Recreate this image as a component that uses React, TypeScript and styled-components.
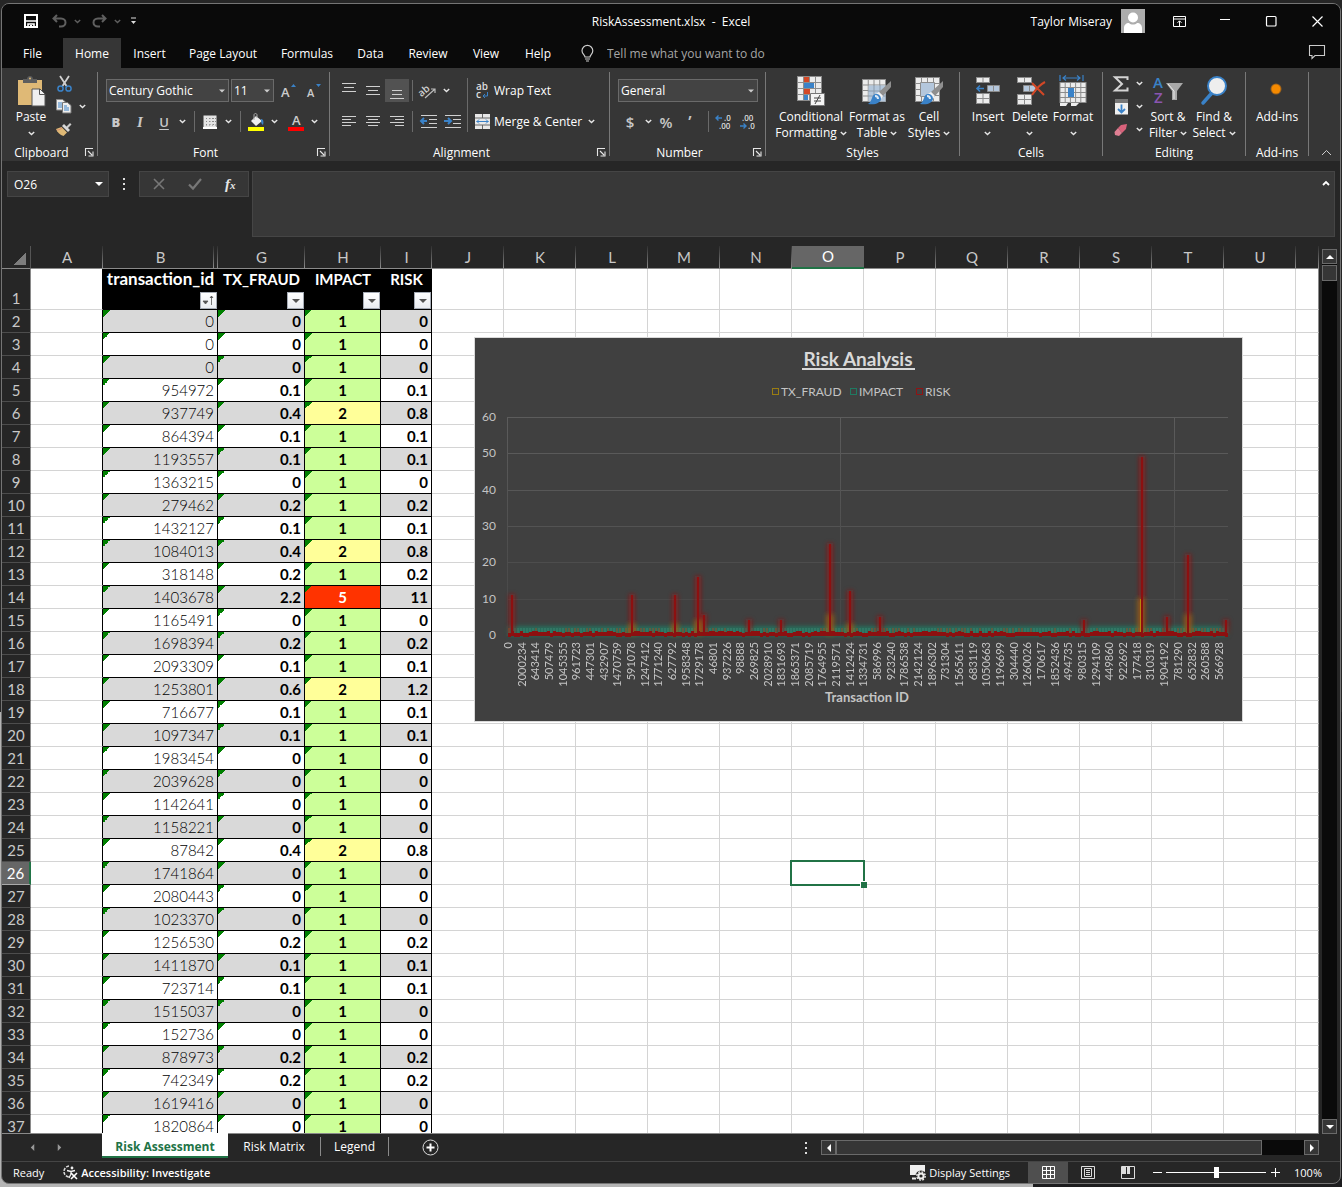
import React from "react";
import styled, { createGlobalStyle, css } from "styled-components";

const ui = `"Open Sans", "Noto Sans", sans-serif`;
const gothic = `Lato, "Open Sans", sans-serif`;

const c = {
  title: "#0a0a0a",
  ribbon: "#363636",
  pane: "#262626",
  line: "#6a6a6a",
  icon: "#e6e6e6",
  dim: "#c8c8c8",
  blue: "#3a82c8",
  gold: "#dfb976",
  green: "#217346",
};

const Global = createGlobalStyle`
  * { box-sizing: border-box; }
  body { margin: 0; background: #1c1c1e; font-family: ${ui}; font-size: 12px; color: #fff; }
  button, input, select { font: inherit; color: inherit; background: none; border: 0; padding: 0; margin: 0; border-radius: 0; }
  svg { display: block; flex: none; overflow: visible; }
`;

const Desktop = styled.div`
  height: 100vh;
  display: flex;
  flex-direction: column;
  padding: 3px 1px 0;
  background: linear-gradient(#262626, #262626) top / 100% 60% no-repeat, linear-gradient(90deg, #b4b4b4 77%, #1c1c1e 77%);
`;
const Window = styled.div`
  flex: 1;
  min-height: 0;
  display: flex;
  flex-direction: column;
  margin-bottom: 3px;
  border: 1px solid #757575;
  border-radius: 8px;
  overflow: hidden;
  background: ${c.pane};
`;

/* title bar */
const TitleBar = styled.header`
  display: grid;
  grid-template-columns: 1fr auto 1fr;
  align-items: center;
  height: 34px;
  flex: none;
  background: ${c.title};
`;
const QuickAccess = styled.div`
  display: flex;
  align-items: center;
  gap: 4px;
  padding-left: 17px;
`;
const DocTitle = styled.div`white-space: pre;`;
const TitleRight = styled.div`
  display: flex;
  align-items: center;
  justify-content: flex-end;
`;
const UserName = styled.span`margin-right: 9px;`;
const Avatar = styled.span`margin-right: 11px;`;
const SysButton = styled.button`
  width: 46px;
  height: 30px;
  display: grid;
  place-items: center;
`;

/* ribbon tabs */
const TabBar = styled.nav`
  display: flex;
  align-items: stretch;
  height: 30px;
  flex: none;
  background: ${c.title};
`;
const RibbonTab = styled.button<{ $w: number; $on?: boolean }>`
  width: ${(p) => p.$w}px;
  text-align: center;
  white-space: nowrap;
  background: ${(p) => (p.$on ? c.ribbon : "none")};
`;
const TellMe = styled.label`
  display: flex;
  align-items: center;
  flex: 1;
  gap: 13px;
  padding-left: 16px;
`;
const TellInput = styled.input`
  width: 200px;
  outline: 0;
  &::placeholder { color: #a6a6a6; opacity: 1; }
`;

/* ribbon */
const Ribbon = styled.div`
  display: grid;
  grid-template-columns: 96px 232px 280px 156px 194px 143px 143px 63px 1fr;
  height: 93px;
  padding: 4px 0 5px;
  flex: none;
  background: ${c.ribbon};
`;
const GroupBox = styled.section`
  display: flex;
  flex-direction: column;
  border-right: 1px solid #787878;
`;
const GroupBody = styled.div<{ $pad?: number }>`
  display: flex;
  flex: 1;
  padding-left: ${(p) => p.$pad ?? 0}px;
`;
const GroupLabel = styled.div<{ $launch?: boolean }>`
  display: grid;
  grid-template-columns: 1fr ${(p) => (p.$launch ? "16px" : "")};
  align-items: center;
  height: 16px;
  margin-bottom: -4px;
  text-align: center;
  white-space: nowrap;
  button { justify-self: center; }
`;
const Rows = styled.div`
  display: flex;
  flex-direction: column;
  gap: 8px;
  padding-top: 7px;
`;
const Row = styled.div<{ $gap?: number }>`
  display: flex;
  align-items: center;
  height: 23px;
  gap: ${(p) => p.$gap ?? 0}px;
`;
const Split = styled.div`
  display: flex;
  margin-right: 4px;
`;
const Tool = styled.button<{ $on?: boolean; $narrow?: boolean }>`
  width: ${(p) => (p.$narrow ? 12 : 24)}px;
  height: 23px;
  display: grid;
  place-items: center;
  flex: none;
  color: ${c.dim};
  background: ${(p) => (p.$on ? "#525252" : "none")};
`;
const Glyph = styled.span<{ $kind?: "b" | "i" | "u"; $size?: number }>`
  font-size: ${(p) => p.$size ?? 13}px;
  line-height: 16px;
  font-weight: ${(p) => (p.$kind === "b" ? 800 : 600)};
  ${(p) => p.$kind === "i" && css`font-style: italic; font-family: "Liberation Serif", serif; font-size: 15px; font-weight: 700;`}
  ${(p) => p.$kind === "u" && css`text-decoration: underline; text-underline-offset: 2px;`}
`;
const Sep = styled.i<{ $tall?: boolean; $lead?: boolean }>`
  width: 1px;
  height: ${(p) => (p.$tall ? 54 : 21)}px;
  margin: ${(p) => (p.$tall ? "6px 4px 0 3px" : p.$lead ? "0 3px 0 6px" : "0 3px")};
  background: ${c.line};
  flex: none;
`;
const Picker = styled.div<{ $w: number }>`
  position: relative;
  width: ${(p) => p.$w}px;
  height: 23px;
  svg { position: absolute; right: 4px; top: 9px; pointer-events: none; }
`;
const PickerSelect = styled.select`
  appearance: none;
  width: 100%;
  height: 100%;
  padding-left: 2px;
  border: 1px solid #6a6a6a;
  background: #434343;
  outline: 0;
`;
const Wide = styled.button`
  display: flex;
  align-items: center;
  gap: 4px;
  height: 23px;
  padding: 0 3px;
  white-space: nowrap;
`;
const Big = styled.button<{ $w: number }>`
  width: ${(p) => p.$w}px;
  display: flex;
  flex-direction: column;
  align-items: center;
  gap: 2px;
  padding-top: 3px;
  line-height: 16px;
`;
const BigText = styled.span`
  display: flex;
  flex-direction: column;
  align-items: center;
  white-space: nowrap;
  span { display: flex; align-items: center; gap: 3px; min-height: 16px; }
`;
const Small = styled.div`
  display: flex;
  flex-direction: column;
  height: 69px;
`;
const Collapse = styled.div`
  display: flex;
  justify-content: flex-end;
  align-items: flex-end;
  padding-right: 8px;
`;

/* formula bar */
const FormulaBar = styled.div`
  display: flex;
  align-items: flex-start;
  height: 85px;
  padding: 10px 5px 9px;
  flex: none;
`;
const NameBox = styled.label`
  position: relative;
  width: 102px;
  height: 26px;
  svg { position: absolute; right: 6px; top: 9px; }
`;
const NameInput = styled.input`
  width: 100%;
  height: 100%;
  padding-left: 6px;
  border: 1px solid #454545;
  background: ${c.ribbon};
`;
const Dots = styled.span`
  width: 30px;
  height: 26px;
  display: grid;
  place-items: center;
`;
const FxBox = styled.div`
  display: flex;
  align-items: center;
  justify-content: space-around;
  width: 110px;
  height: 26px;
  padding: 0 1px;
  margin-right: 3px;
  border: 1px solid #454545;
  background: ${c.ribbon};
`;
const FxText = styled.span`
  font: italic 700 15px "Liberation Serif", serif;
  color: ${c.icon};
  small { font-size: 11px; }
`;
const FormulaField = styled.div`
  flex: 1;
  display: flex;
  align-self: stretch;
  border: 1px solid #454545;
  background: #383838;
`;
const FormulaInput = styled.input`
  flex: 1;
  outline: 0;
`;
const FormulaToggle = styled.button`
  align-self: flex-start;
  padding: 8px 4px;
`;

/* sheet */
const SheetArea = styled.div`
  flex: 1;
  min-height: 0;
  display: flex;
`;
const Sheet = styled.div`
  position: relative;
  flex: 1;
  min-width: 0;
  overflow: hidden;
  border-bottom: 1px solid #8a8a8a;
`;
const Table = styled.table`
  width: 100%;
  table-layout: fixed;
  border-collapse: separate;
  border-spacing: 0;
  font-family: ${gothic};
  font-size: 15px;
  line-height: 22px;
  color: #000;
  thead { line-height: 21px; }
  th, td { padding: 0; overflow: hidden; white-space: nowrap; }
`;
const ColHead = styled.th<{ $on?: boolean; $double?: boolean }>`
  height: 23px;
  font-weight: 400;
  color: ${(p) => (p.$on ? "#fff" : c.dim)};
  border-bottom: ${(p) => (p.$on ? `2px solid ${c.green}` : "1px solid #8a8a8a")};
  background: ${(p) =>
    p.$on
      ? "#666"
      : "linear-gradient(#303030, #8a8a8a) right / 1px 100% no-repeat, " +
        (p.$double ? "linear-gradient(#303030, #8a8a8a) right 4px top / 1px 100% no-repeat, " : "") +
        c.pane};
`;
const Corner = styled.th`
  background: linear-gradient(135deg, transparent 50%, #7d7d7d 50%) right 4px bottom 3px / 13px 13px no-repeat, ${c.pane};
  border-bottom: 1px solid #8a8a8a;
  border-right: 1px solid #555;
`;
const RowHead = styled.th<{ $on?: boolean }>`
  font-weight: 400;
  vertical-align: bottom;
  color: ${(p) => (p.$on ? "#fff" : c.dim)};
  background: ${(p) => (p.$on ? "#666" : c.pane)};
  border-right: ${(p) => (p.$on ? `2px solid ${c.green}` : "1px solid #8a8a8a")};
  border-bottom: 1px solid ${(p) => (p.$on ? "#aaa" : "#4d4d4d")};
`;
const Blank = styled.td<{ $edge?: boolean; $last?: boolean }>`
  background: #fff;
  border-right: 1px solid ${(p) => (p.$edge ? "#000" : p.$last ? "#8a8a8a" : "#d4d4d4")};
  border-bottom: 1px solid #d4d4d4;
`;
const HeadCell = styled.td<{ $large?: boolean }>`
  height: 41px;
  background: #000;
  color: #fff;
  font-size: ${(p) => (p.$large ? 17 : 15)}px;
  font-weight: 700;
  text-align: center;
  vertical-align: top;
`;
const HeadStack = styled.div`
  display: flex;
  flex-direction: column;
  justify-content: space-between;
  height: 40px;
  line-height: 20px;
`;
const FilterButton = styled.button`
  align-self: flex-end;
  width: 17px;
  height: 17px;
  margin-right: 1px;
  display: grid;
  place-items: center;
  border: 1px solid #a5abb5;
  background: linear-gradient(#fff, #e9ecf1);
`;
const Data = styled.td<{ $bg: string; $align?: string; $flag?: boolean; $light?: boolean; $color?: string }>`
  && { padding: 0 3px; }
  height: 23px;
  text-align: ${(p) => p.$align ?? "right"};
  font-weight: ${(p) => (p.$light ? 300 : 700)};
  color: ${(p) => p.$color ?? "#000"};
  border-right: 1px solid #000;
  border-bottom: 1px solid #000;
  background: ${(p) => (p.$flag ? "linear-gradient(135deg, #008000 50%, transparent 50%) left top / 7px 7px no-repeat, " : "")} ${(p) => p.$bg};
`;
const Selection = styled.div`
  position: absolute;
  left: 788px;
  top: 614px;
  width: 75px;
  height: 26px;
  border: 2px solid ${c.green};
  &::after {
    content: "";
    position: absolute;
    right: -4px;
    bottom: -4px;
    width: 6px;
    height: 6px;
    border: solid #fff;
    border-width: 1px 0 0 1px;
    background: ${c.green};
  }
`;
const ChartFrame = styled.div`
  position: absolute;
  left: 472px;
  top: 91px;
  border: 1px solid #d9d9d9;
  background: #404040;
`;
const VScroll = styled.div`
  display: flex;
  flex-direction: column;
  width: 21px;
  padding: 3px 3px 0;
`;
const Track = styled.div`
  flex: 1;
  background: ${c.title};
  padding-top: 1px;
`;
const VThumb = styled.div`
  height: 16px;
  border: 1px solid ${c.line};
  background: ${c.ribbon};
`;
const ScrollButton = styled.button`
  width: 15px;
  height: 15px;
  display: grid;
  place-items: center;
  flex: none;
  border: 1px solid ${c.line};
  background: ${c.ribbon};
`;

/* sheet tabs */
const SheetTabs = styled.div`
  display: flex;
  height: 27px;
  flex: none;
`;
const NavArrows = styled.div`
  display: flex;
  align-items: center;
  gap: 3px;
  width: 100px;
  padding-left: 18px;
`;
const SheetTab = styled.button<{ $w: number; $on?: boolean }>`
  width: ${(p) => p.$w}px;
  height: ${(p) => (p.$on ? 25 : 19)}px;
  margin-top: ${(p) => (p.$on ? -1 : 3)}px;
  position: relative;
  text-align: center;
  white-space: nowrap;
  ${(p) =>
    p.$on
      ? css`padding-top: 3px; background: #fff; color: ${c.green}; font-weight: 700; border-bottom: 2px solid ${c.green};`
      : css`border-right: 1px solid #8a8a8a;`}
`;
const AddSheet = styled.button`
  width: 82px;
  display: grid;
  place-items: center;
`;
const HScroll = styled.div`
  display: flex;
  align-items: center;
  margin-left: auto;
  padding-right: 21px;
  width: 549px;
`;
const HTrack = styled.div`
  flex: 1;
  height: 15px;
  background: ${c.title};
`;
const HThumb = styled.div`
  width: 91%;
  height: 15px;
  border: 1px solid ${c.line};
  background: ${c.ribbon};
`;

/* status bar */
const StatusBar = styled.footer`
  display: flex;
  align-items: center;
  height: 22px;
  flex: none;
  border-top: 1px solid #454545;
  padding: 0 18px 0 11px;
  font-size: 11px;
  white-space: nowrap;
`;
const Access = styled.button`
  display: flex;
  align-items: center;
  gap: 3px;
  margin-left: 18px;
  font-weight: 600;
`;
const Display = styled.button`
  display: flex;
  align-items: center;
  gap: 3px;
  margin-left: auto;
  margin-right: 18px;
`;
const ViewButton = styled.button<{ $on?: boolean }>`
  width: 40px;
  height: 21px;
  display: grid;
  place-items: center;
  background: ${(p) => (p.$on ? "#4f4f4f" : "none")};
`;
const ZoomButton = styled.button`
  width: 18px;
  height: 21px;
  display: grid;
  place-items: center;
`;
const Slider = styled.input`
  appearance: none;
  width: 100px;
  height: 12px;
  background: linear-gradient(#fff, #fff) center / 100% 1px no-repeat;
  &::-webkit-slider-thumb { appearance: none; width: 5px; height: 11px; background: #fff; }
`;
const Percent = styled.span`
  width: 38px;
  text-align: right;
`;

/* ---------- icons ---------- */
const Chevron = ({ color = "#e6e6e6" }: { color?: string }) => (
  <svg width="7" height="5" viewBox="0 0 7 5"><path d="M.8 1 3.5 3.6 6.2 1" fill="none" stroke={color} strokeWidth="1.4" /></svg>
);
const Tri = ({ dir = "down", color = "#fff", s = 7 }: { dir?: "down" | "up" | "left" | "right"; color?: string; s?: number }) => {
  const d = { down: "M0 2h8L4 6z", up: "M0 6h8L4 2z", left: "M6 0v8L2 4z", right: "M2 0v8l4-4z" }[dir];
  return <svg width={s} height={s} viewBox="0 0 8 8"><path d={d} fill={color} /></svg>;
};
const Lines = ({ rows, y }: { rows: [number, number][]; y: number }) => (
  <svg width="16" height="18" viewBox="0 0 16 18" shapeRendering="crispEdges">
    {rows.map(([a, b], i) => <path key={i} d={`M${a} ${y + i * (rows.length > 3 ? 3 : 4) + 0.5}H${b}`} stroke="#d0d0d0" />)}
  </svg>
);
const Grid = ({ x, y, w, h, nx, ny }: { x: number; y: number; w: number; h: number; nx: number; ny: number }) => (
  <g>
    <rect x={x} y={y} width={w} height={h} fill="#ececec" stroke="#8c8c8c" />
    {Array.from({ length: nx - 1 }, (_, i) => <path key={"x" + i} d={`M${x + ((i + 1) * w) / nx} ${y}v${h}`} stroke="#8c8c8c" />)}
    {Array.from({ length: ny - 1 }, (_, i) => <path key={"y" + i} d={`M${x} ${y + ((i + 1) * h) / ny}h${w}`} stroke="#8c8c8c" />)}
  </g>
);
const Brush = () => (
  <g>
    <path d="M30 6v6l-8 9-4-4z" fill="#8f8f8f" />
    <path d="m18 17 4 4-2 3-5-5z" fill="#f2f2f2" />
    <path d="M15 19c3 0 5 2 5 5-1 4-5 6-13 5 3-2 3-4 4-6 1-3 2-4 4-4z" fill={c.blue} />
    <path d="M14 21c2 0 3 1 3 3" stroke="#dbe9f7" strokeWidth="2" fill="none" />
  </g>
);
const iconText = { fontFamily: "Open Sans, sans-serif", fontWeight: 600 };
const I = {
  save: <svg width="14" height="14" viewBox="0 0 14 14"><path d="M1 1h12v12H1z" fill="none" stroke="#fff" strokeWidth="2" /><path d="M1 7h12M4 13v-3h6v3" stroke="#fff" strokeWidth="1.6" fill="none" /><path d="M6 11h2v2H6z" fill="#fff" /></svg>,
  undo: <svg width="15" height="14" viewBox="0 0 15 14"><path d="M5 1 1.5 4.5 5 8M2 4.5h7c6 0 6 8 0 8H7" fill="none" stroke="#5f5f5f" strokeWidth="2" /></svg>,
  redo: <svg width="15" height="14" viewBox="0 0 15 14"><path d="m10 1 3.5 3.5L10 8M13 4.5H6c-6 0-6 8 0 8h2" fill="none" stroke="#5f5f5f" strokeWidth="2" /></svg>,
  custom: <svg width="7" height="8" viewBox="0 0 7 8"><path d="M1 1h5" stroke="#ddd" strokeWidth="1.2" /><path d="M1 4h5L3.5 7z" fill="#ddd" /></svg>,
  avatar: <svg width="24" height="24" viewBox="0 0 24 24"><path fill="#adadad" d="M0 0h24v24H0z" /><circle cx="12" cy="8.5" r="5" fill="#fff" /><path d="M3 24v-5c0-3 2-5 5-5 2 2 6 2 8 0 3 0 5 2 5 5v5z" fill="#fff" /></svg>,
  ribbonOpt: <svg width="13" height="11" viewBox="0 0 13 11"><path d="M.5.5h12v10H.5zM.5 3h12M6.5 10V5M4.5 6.8l2-2 2 2" fill="none" stroke="#fff" /></svg>,
  min: <svg width="11" height="11" viewBox="0 0 11 11"><path d="M0 3.5h10" stroke="#fff" /></svg>,
  max: <svg width="11" height="11" viewBox="0 0 11 11"><rect x=".5" y=".5" width="9.5" height="9.5" rx="1" fill="none" stroke="#fff" strokeWidth="1.2" /></svg>,
  close: <svg width="11" height="11" viewBox="0 0 11 11"><path d="m.5.5 10 10m0-10-10 10" stroke="#fff" strokeWidth="1.2" /></svg>,
  comment: <svg width="16" height="16" viewBox="0 0 16 16"><path d="M.5 .5h15v10H6l-3 3v-3H.5z" fill="none" stroke="#ccc" strokeWidth="1.1" /></svg>,
  bulb: <svg width="13" height="17" viewBox="0 0 13 17"><path d="M4 12c0-2-3-3-3-6.2a5.3 5.3 0 0 1 10.8 0C11.8 9 9 10 9 12zM4 14h5M5 16h3" fill="none" stroke="#ccc" strokeWidth="1.2" /></svg>,
  paste: <svg width="30" height="32" viewBox="0 0 30 32"><path d="M2 5h24v25H2z" fill={c.gold} /><path d="M7 8V4h4c0-4 6-4 6 0h4v4z" fill="#5d5d5d" /><circle cx="14" cy="3.5" r="1" fill={c.gold} /><path d="M16 14h8l5 5v12H16z" fill="#f0f0f0" stroke="#555" /><path d="M23.5 14v5.5H29" fill="none" stroke="#555" /></svg>,
  cut: <svg width="15" height="16" viewBox="0 0 15 16"><path d="m3 0 6.5 10M12 0 5.5 10" stroke="#d0d0d0" strokeWidth="1.8" /><circle cx="3.5" cy="12.5" r="2.6" fill="none" stroke={c.blue} strokeWidth="1.5" /><circle cx="11.5" cy="12.5" r="2.6" fill="none" stroke={c.blue} strokeWidth="1.5" /></svg>,
  copy: <svg width="16" height="15" viewBox="0 0 16 15"><path d="M.5.5h6l3 2.5v8h-9z" fill="#eee" stroke="#888" /><path d="M2 4h4M2 6h4M2 8h4" stroke={c.blue} /><path d="M6.5 3.5h5l3.5 3V14H6.5z" fill="#eee" stroke="#777" /><path d="M8 7h3M8 9h5M8 11h5" stroke={c.blue} /></svg>,
  painter: <svg width="16" height="15" viewBox="0 0 16 15"><path d="M10 5 14 1l1.5 1.5-4 4z" fill="#ccc" /><path d="m6 4 6 6 2-2-6-6z" fill="#d8d8d8" /><path d="M5.5 5 11 10.5 7.5 14C4 13 1 10 0 7z" fill={c.gold} /><path d="M1 8c3 0 3-1 5-2" stroke="#d88a70" fill="none" /></svg>,
  launcher: <svg width="9" height="9" viewBox="0 0 9 9"><path d="M.5 8V.5H8M3 3l4 4M8 3.5V8H3.5" fill="none" stroke="#e6e6e6" strokeWidth="1.1" /></svg>,
  border: <svg width="14" height="14" viewBox="0 0 14 14"><path d="M.5.5h13v12H.5z" fill="#e4e4e4" /><path d="M0 6.5h14M7 0v13M3.5 0v13M10.5 0v13M0 3.5h14M0 10h14" stroke="#888" strokeDasharray="1 2" /><path d="M0 13h14" stroke="#fff" strokeWidth="2" /></svg>,
  fill: <svg width="17" height="18" viewBox="0 0 17 18"><path d="m8 3 6 5-6 5-5-5z" fill="#eee" /><path d="M6 7V2c0-2 3-2 3 0v3" fill="none" stroke="#aaa" /><path d="M13 6c2 0 3 2 2 6-2-1-2-3-2-6z" fill={c.blue} /><path d="M0 14h16v4H0z" fill="#ff0" /></svg>,
  orient: <svg width="18" height="16" viewBox="0 0 18 16"><text x="-1" y="11" transform="rotate(-40 5 8)" {...iconText} fontSize="10" fill="#d0d0d0">ab</text><path d="m6 15 10-9M12 6h4v4" fill="none" stroke="#bbb" strokeWidth="1.2" /></svg>,
  wrap: <svg width="15" height="17" viewBox="0 0 15 17"><text x="1" y="8" {...iconText} fontSize="10" fill="#ddd">ab</text><text x="1" y="16" {...iconText} fontSize="10" fill="#ddd">c</text><path d="M12.5 10v4H8M10 12l-2 2 2 2" fill="none" stroke={c.blue} /></svg>,
  merge: <svg width="15" height="15" viewBox="0 0 15 15"><path d="M0 0h15v15H0z" fill="#e8e8e8" /><path d="M0 4h15M0 11h15M7.5 0v4M7.5 11v4" stroke="#666" /><path d="M1.5 7.5h12M4 5.5l-2 2 2 2M11 5.5l2 2-2 2" fill="none" stroke={c.blue} /></svg>,
  cond: <svg width="30" height="32" viewBox="0 0 30 32"><Grid x={1.5} y={1.5} w={24} h={24} nx={4} ny={4} /><path d="M8 2h5v5H8zM8 14h6v5H8z" fill="#d24726" /><path d="M8 8h10v5H8zM8 20h4v5H8z" fill={c.blue} /><path d="M14.5 18.5h14v12h-14z" fill="#f4f4f4" stroke="#777" /><path d="M18 23h7M18 26h7M24 20l-5 9" stroke="#444" /></svg>,
  fmtTable: <svg width="32" height="32" viewBox="0 0 32 32"><Grid x={1.5} y={4.5} w={23} h={22} nx={4} ny={4} /><path d="M7.5 10.5h17v16h-17z" fill="#b4c7dc" /><path d="M7 16h18M7 21h18M13 10v16M19 10v16" stroke="#8c9cac" /><Brush /></svg>,
  cellStyle: <svg width="32" height="32" viewBox="0 0 32 32"><Grid x={2.5} y={2.5} w={24} h={24} nx={4} ny={4} /><path d="M7.5 7.5h14v14h-14z" fill="#b4c7dc" stroke="#8c8c8c" /><Brush /></svg>,
  insert: <svg width="28" height="32" viewBox="0 0 28 32"><Grid x={2.5} y={2.5} w={13} h={5} nx={2} ny={1} /><path d="M13.5 10.5h12v6h-12zM19.5 10v6" fill="#b4c7dc" stroke="#8c8c8c" /><path d="M10 13.5H3M6 10.5l-3 3 3 3" fill="none" stroke={c.blue} strokeWidth="1.6" /><Grid x={2.5} y={18.5} w={13} h={10} nx={2} ny={2} /></svg>,
  del: <svg width="31" height="32" viewBox="0 0 31 32"><Grid x={2.5} y={2.5} w={14} h={5} nx={2} ny={1} /><path d="M8.5 10.5h12v6h-12zM14.5 10v6" fill="#b4c7dc" stroke="#8c8c8c" /><Grid x={2.5} y={19.5} w={14} h={10} nx={2} ny={2} /><path d="m17 8 12 12M30 7c-6 3-9 7-13 13" fill="none" stroke="#d24726" strokeWidth="2" /></svg>,
  format: <svg width="28" height="32" viewBox="0 0 28 32"><path d="M1 0v6M24 0v6M4 3h17M7 .5 4 3l3 2.5M18 .5 21 3l-3 2.5" fill="none" stroke={c.blue} strokeWidth="1.2" /><Grid x={1} y={7.5} w={26} h={20} nx={5} ny={4} /><path d="M9 13h6v9H9z" fill={c.blue} /><path d="M1 28h8l-2 3H1zM12 28h8l-3 3h-5z" fill="#eee" /></svg>,
  sigma: <svg width="16" height="16" viewBox="0 0 16 16"><path d="M14.5 4V1.2H2L9 8l-7 6.5h12.5v-3" fill="none" stroke="#d4d4d4" strokeWidth="2" /></svg>,
  fillDown: <svg width="15" height="16" viewBox="0 0 15 16"><path d="M1 .5h13v15H1z" fill="#f0f0f0" /><path d="M1 0h13v4H1z" fill="#777" /><path d="M7.5 5.5v8M4 10l3.5 3.5L11 10" fill="none" stroke={c.blue} strokeWidth="1.8" /></svg>,
  eraser: <svg width="14" height="14" viewBox="0 0 14 14"><path d="m7 2 6-1-1 5-4 4-4-5z" fill="#d9627b" /><path d="m4 5 4 5-3 3-4-1-.5-3z" fill="#e07f93" /></svg>,
  sort: <svg width="30" height="32" viewBox="0 0 30 32"><text x="0" y="13" {...iconText} fontSize="15" fill={c.blue}>A</text><text x="1" y="28" {...iconText} fontSize="15" fill="#8a55b0">Z</text><path d="M13 8h17l-6 8v9h-5v-9z" fill="#a8a8a8" /><path d="m15 9 6 7v8" stroke="#eee" fill="none" /></svg>,
  find: <svg width="28" height="32" viewBox="0 0 28 32"><path d="M11 19 3 28" stroke={c.blue} strokeWidth="3.5" strokeLinecap="round" /><circle cx="17" cy="11" r="9" fill="#eee" stroke={c.blue} strokeWidth="2" /></svg>,
  addins: <svg width="32" height="32" viewBox="0 0 32 32"><circle cx="15" cy="14" r="5.5" fill="#ff8c00" opacity=".5" /><circle cx="15" cy="14" r="4.5" fill="#f58a00" /></svg>,
  decimal: (inc: boolean) => (
    <svg width="18" height="16" viewBox="0 0 18 16" {...iconText} fontSize="8" fill="#ddd">
      <text x={inc ? 9 : 3} y="7">{inc ? ".0" : ".00"}</text><text x={inc ? 4 : 9} y="15">{inc ? ".00" : ".0"}</text>
      {inc ? <path d="M7 4H1M3.5 1.5 1 4l2.500 2.5" fill="none" stroke={c.blue} strokeWidth="1.4" /> : <path d="M1 12h6M4.5 9.5 7 12l-2.5 2.5" fill="none" stroke={c.blue} strokeWidth="1.4" />}
    </svg>
  ),
  indent: (right: boolean) => (
    <svg width="17" height="16" viewBox="0 0 17 16"><path d="M1 1.5h16M9 5.5h8M9 9.5h8M1 13.5h16" stroke="#d0d0d0" /><path d={right ? "M0 7h7M4 4l3 3-3 3" : "M7 7H1M4 4 1 7l3 3"} fill="none" stroke={c.blue} strokeWidth="2" /></svg>
  ),
  dots: <svg width="3" height="12" viewBox="0 0 3 12"><path d="M0 0h2v2H0zM0 5h2v2H0zM0 10h2v2H0z" fill="#ddd" /></svg>,
  access: <svg width="16" height="15" viewBox="0 0 16 15"><path d="M7 1a5.5 5.5 0 1 0 1 11" fill="none" stroke="#ddd" strokeWidth="1.5" strokeDasharray="3 1.2" /><circle cx="10" cy="3" r="1.4" fill="#eee" /><path d="M5 5.5 9 6.5l4-1M9 6.5V9l-2 4" fill="none" stroke="#eee" strokeWidth="1.3" /><path d="m9 8 6 6m0-6-6 6" stroke="#fff" strokeWidth="1.6" /></svg>,
  display: <svg width="16" height="16" viewBox="0 0 16 16"><path d="M0 0h15v10H0z" fill="#eee" /><path d="M2 13.5h4" stroke="#eee" strokeWidth="2" /><circle cx="11" cy="11" r="5.5" fill={c.pane} /><circle cx="11" cy="11" r="2.6" fill="none" stroke="#eee" strokeWidth="2" /><circle cx="11" cy="11" r="4.2" fill="none" stroke="#eee" strokeWidth="1.4" strokeDasharray="1.8 1.5" /></svg>,
};

/* ---------- data ---------- */
const tx: [string, string, number, string][] = [
  ["0", "0", 1, "0"], ["0", "0", 1, "0"], ["0", "0", 1, "0"], ["954972", "0.1", 1, "0.1"], ["937749", "0.4", 2, "0.8"],
  ["864394", "0.1", 1, "0.1"], ["1193557", "0.1", 1, "0.1"], ["1363215", "0", 1, "0"], ["279462", "0.2", 1, "0.2"],
  ["1432127", "0.1", 1, "0.1"], ["1084013", "0.4", 2, "0.8"], ["318148", "0.2", 1, "0.2"], ["1403678", "2.2", 5, "11"],
  ["1165491", "0", 1, "0"], ["1698394", "0.2", 1, "0.2"], ["2093309", "0.1", 1, "0.1"], ["1253801", "0.6", 2, "1.2"],
  ["716677", "0.1", 1, "0.1"], ["1097347", "0.1", 1, "0.1"], ["1983454", "0", 1, "0"], ["2039628", "0", 1, "0"],
  ["1142641", "0", 1, "0"], ["1158221", "0", 1, "0"], ["87842", "0.4", 2, "0.8"], ["1741864", "0", 1, "0"],
  ["2080443", "0", 1, "0"], ["1023370", "0", 1, "0"], ["1256530", "0.2", 1, "0.2"], ["1411870", "0.1", 1, "0.1"],
  ["723714", "0.1", 1, "0.1"], ["1515037", "0", 1, "0"], ["152736", "0", 1, "0"], ["878973", "0.2", 1, "0.2"],
  ["742349", "0.2", 1, "0.2"], ["1619416", "0", 1, "0"], ["1820864", "0", 1, "0"],
];
const impactColor: Record<number, string> = { 1: "#ccff99", 2: "#ffff99", 5: "#ff3300" };
const restCols = "JKLMNOPQRSTU".split("");
const axis = "0,2000234,643414,507479,1045355,961723,447301,432907,1470759,591078,1247412,1771240,627792,1958348,1729178,46801,937226,98888,269825,2028910,1831693,1865371,2085719,1764955,2119571,1412424,1334731,586996,923240,1786538,2142124,1896302,731304,1565611,683119,1050663,1196699,304440,1260026,170617,1852436,494735,980315,1294109,449860,922692,177418,310319,1904192,781290,652832,260588,566928".split(",");
const peaks: [number, number][] = [[37, 11], [157, 11], [200, 11], [223, 16], [229, 5.5], [274, 4], [306, 4], [355, 25], [375, 12], [405, 5], [609, 4], [667, 49], [692, 5], [713, 22], [751, 4]];
const fraud: [number, number][] = [[223, 4], [355, 5.5], [666, 10], [713, 5.5], [157, 3], [200, 3], [375, 3]];

/* ---------- chart ---------- */
const base = 297;
const unit = 218 / 60;
function RiskChart() {
  const bars = Array.from({ length: 240 }, (_, i) => ({ x: 33 + i * 3, n: (i * 7919 + ((i * i) % 17) * 31) % 11 }));
  return (
    <ChartFrame>
      <svg width="767" height="383" viewBox="0 0 767 383" fontFamily="Lato, sans-serif" fill="#c4c4c4" role="img" aria-label="Risk Analysis">
        <defs>
          <filter id="glow" x="-20" y="-20" width="800" height="420" filterUnits="userSpaceOnUse"><feGaussianBlur stdDeviation="2" /></filter>
          <linearGradient id="fade" gradientUnits="userSpaceOnUse" x1="0" y1="79" x2="0" y2={base}><stop offset="0" stopColor="#5c5c5c" /><stop offset="1" stopColor="#454545" /></linearGradient>
        </defs>
        <text x="383" y="28" textAnchor="middle" fontSize="19" fontWeight="700" fill="#d9d9d9">Risk Analysis</text>
        <path d="M327 31h113" stroke="#d9d9d9" strokeWidth="2" />
        {([["TX_FRAUD", 297, "#9a7d12"], ["IMPACT", 375, "#1f7a62"], ["RISK", 441, "#8e1515"]] as const).map(([t, x, col]) => (
          <g key={t}><rect x={x + 0.5} y="50.5" width="6" height="6" fill="none" stroke={col} /><text x={x + 9} y="58" fontSize="12">{t}</text></g>
        ))}
        {[0, 10, 20, 30, 40, 50, 60].map((v) => {
          const y = Math.round(base - v * unit);
          return <g key={v}><text x="21" y={y + 4} textAnchor="end" fontSize="12">{v}</text><path d={`M32 ${y + 0.5}h721`} stroke={["#454545", "#494949", "#4d4d4d", "#535353", "#575757", "#5a5a5a", "#5c5c5c"][v / 10]} /></g>;
        })}
        <path d={`M32.5 79V${base}M365.5 79V${base}M699.5 79V${base}`} stroke="url(#fade)" />
        <rect x="33" y={base - 9} width="720" height="10" fill="#1f7f66" opacity=".75" filter="url(#glow)" />
        {bars.map((b) => <rect key={b.x} x={b.x} y={base - 7} width="2" height="7" fill={b.n % 3 === 0 ? "#6d5a3c" : "#357a66"} opacity=".8" />)}
        <g filter="url(#glow)">
          {peaks.map(([x, v]) => <rect key={x} x={x - 3} y={base - v * unit - 1} width="6" height={v * unit} fill="#9c1414" opacity=".65" />)}
          {fraud.map(([x, v]) => <rect key={x} x={x - 4} y={base - v * unit} width="8" height={v * unit} fill="#a06a10" opacity=".6" />)}
        </g>
        <rect x="665" y={base - 36} width="1" height="36" fill="#b8860b" />
        {peaks.map(([x, v]) => <rect key={x} x={x - 1} y={Math.round(base - v * unit)} width="2" height={Math.round(v * unit)} fill="#8c1010" />)}
        {bars.map((b) => <rect key={b.x} x={b.x} y={base - (b.n > 7 ? 4 : b.n > 2 ? 3 : 2)} width="3" height="4" fill="#8c1010" />)}
        <rect x="33" y={base - 1} width="720" height="2" fill="#8c1010" />
        {axis.map((t, i) => {
          const x = Math.round(37 + i * 13.67);
          return <text key={t} x={x} y="304" transform={`rotate(-90 ${x} 304)`} textAnchor="end" fontSize="11">{t}</text>;
        })}
        <text x="392" y="364" textAnchor="middle" fontSize="13" fontWeight="700">Transaction ID</text>
      </svg>
    </ChartFrame>
  );
}

/* ---------- pieces ---------- */
const Caret = ({ label }: { label: string }) => <Tool $narrow aria-label={label}><Chevron /></Tool>;
function Group({ label, pad, launch, children }: { label: string; pad?: number; launch?: boolean; children: React.ReactNode }) {
  return (
    <GroupBox>
      <GroupBody $pad={pad}>{children}</GroupBody>
      <GroupLabel $launch={launch}><span>{label}</span>{launch && <button aria-label={label + " settings"}>{I.launcher}</button>}</GroupLabel>
    </GroupBox>
  );
}
const Select = ({ w, label, value }: { w: number; label: string; value: string }) => (
  <Picker $w={w}><PickerSelect aria-label={label} defaultValue={value}><option>{value}</option></PickerSelect><Tri s={6} color="#ccc" /></Picker>
);
const BigButton = ({ w, icon, top, bottom, caret }: { w: number; icon: React.ReactNode; top: string; bottom?: string; caret?: boolean }) => (
  <Big $w={w}>{icon}<BigText><span>{top}</span>{caret && <span>{bottom}<Chevron /></span>}</BigText></Big>
);
const HeaderCell = ({ text, sorted }: { text: string; sorted?: boolean }) => (
  <HeadCell $large={sorted}>
    <HeadStack>
      {text}
      <FilterButton aria-label={"Filter " + text}>
        {sorted ? <svg width="11" height="11" viewBox="0 0 11 11"><path d="M0 6h5L2.5 9zM8.5 10V1M7 3l1.5-2L10 3" fill="#555" stroke="#555" strokeWidth=".8" /></svg> : <Tri color="#555" s={8} />}
      </FilterButton>
    </HeadStack>
  </HeadCell>
);
const restCells = [...restCols.map((k) => <Blank key={k} />), <Blank key="end" $last />];

export default function App() {
  const tabs: [string, number][] = [["File", 61], ["Home", 58], ["Insert", 57], ["Page Layout", 90], ["Formulas", 78], ["Data", 49], ["Review", 66], ["View", 50], ["Help", 54]];
  return (
    <Desktop>
      <Global />
      <Window>
        <TitleBar>
          <QuickAccess>
            <Tool aria-label="Save">{I.save}</Tool>
            <Row><Tool aria-label="Undo">{I.undo}</Tool><Tool $narrow aria-label="Undo list"><Chevron color="#5f5f5f" /></Tool></Row>
            <Row><Tool aria-label="Redo">{I.redo}</Tool><Tool $narrow aria-label="Redo list"><Chevron color="#5f5f5f" /></Tool></Row>
            <Tool $narrow aria-label="Customize">{I.custom}</Tool>
          </QuickAccess>
          <DocTitle>{"RiskAssessment.xlsx  -  Excel"}</DocTitle>
          <TitleRight>
            <UserName>Taylor Miseray</UserName><Avatar>{I.avatar}</Avatar>
            <SysButton aria-label="Ribbon options">{I.ribbonOpt}</SysButton>
            <SysButton aria-label="Minimize">{I.min}</SysButton>
            <SysButton aria-label="Maximize">{I.max}</SysButton>
            <SysButton aria-label="Close">{I.close}</SysButton>
          </TitleRight>
        </TitleBar>
        <TabBar>
          {tabs.map(([t, w]) => <RibbonTab key={t} $w={w} $on={t === "Home"}>{t}</RibbonTab>)}
          <TellMe>{I.bulb}<TellInput placeholder="Tell me what you want to do" /></TellMe>
          <SysButton aria-label="Comments">{I.comment}</SysButton>
        </TabBar>
        <Ribbon>
          <Group label="Clipboard" pad={8} launch>
            <BigButton w={42} icon={I.paste} top="Paste" caret />
            <Small>
              <Row><Tool aria-label="Cut">{I.cut}</Tool></Row>
              <Row><Tool aria-label="Copy">{I.copy}</Tool><Caret label="Copy options" /></Row>
              <Row><Tool aria-label="Format painter">{I.painter}</Tool></Row>
            </Small>
          </Group>
          <Group label="Font" pad={6} launch>
            <Rows>
              <Row $gap={2}>
                <span /><Select w={123} label="Font" value="Century Gothic" /><Select w={43} label="Font size" value="11" />
                <Tool aria-label="Grow font"><svg width="16" height="16" viewBox="0 0 16 16"><text x="1" y="14" {...iconText} fontSize="13" fill="#ccc">A</text><path d="m11 4 2.5-3L16 4z" fill={c.blue} /></svg></Tool>
                <Tool aria-label="Shrink font"><svg width="16" height="16" viewBox="0 0 16 16"><text x="1" y="14" {...iconText} fontSize="11" fill="#ccc">A</text><path d="m10 1 2.5 3L15 1z" fill={c.blue} /></svg></Tool>
              </Row>
              <Row>
                <Tool><Glyph $kind="b">B</Glyph></Tool><Tool><Glyph $kind="i">I</Glyph></Tool><Tool><Glyph $kind="u">U</Glyph></Tool><Caret label="Underline" />
                <Sep $lead /><Tool aria-label="Borders">{I.border}</Tool><Caret label="Borders list" />
                <Sep $lead /><Split><Tool aria-label="Fill color">{I.fill}</Tool><Caret label="Fill list" /></Split>
                <Tool aria-label="Font color"><svg width="16" height="18" viewBox="0 0 16 18"><text x="4" y="12" {...iconText} fontSize="13" fill="#ccc">A</text><path d="M0 14h16v4H0z" fill="red" /></svg></Tool><Caret label="Font color list" />
              </Row>
            </Rows>
          </Group>
          <Group label="Alignment" pad={7} launch>
            <Rows>
              <Row>
                <Tool aria-label="Top align"><Lines y={1} rows={[[1, 15], [3, 13], [1, 15]]} /></Tool>
                <Tool aria-label="Middle align"><Lines y={4} rows={[[1, 15], [3, 13], [1, 15]]} /></Tool>
                <Tool $on aria-label="Bottom align"><Lines y={8} rows={[[3, 13], [3, 13], [1, 15]]} /></Tool>
                <Sep /><Tool aria-label="Orientation">{I.orient}</Tool><Caret label="Orientation list" />
              </Row>
              <Row>
                <Tool aria-label="Align left"><Lines y={3} rows={[[1, 15], [1, 10], [1, 15], [1, 10]]} /></Tool>
                <Tool aria-label="Center"><Lines y={3} rows={[[1, 15], [3, 13], [1, 15], [3, 13]]} /></Tool>
                <Tool aria-label="Align right"><Lines y={3} rows={[[1, 15], [6, 15], [1, 15], [6, 15]]} /></Tool>
                <Sep /><Tool aria-label="Decrease indent">{I.indent(false)}</Tool><Tool aria-label="Increase indent">{I.indent(true)}</Tool>
              </Row>
            </Rows>
            <Sep $tall />
            <Rows>
              <Row><Wide>{I.wrap}Wrap Text</Wide></Row>
              <Row><Wide>{I.merge}Merge &amp; Center</Wide><Caret label="Merge list" /></Row>
            </Rows>
          </Group>
          <Group label="Number" pad={8} launch>
            <Rows>
              <Select w={140} label="Number format" value="General" />
              <Row>
                <Tool><Glyph $size={15}>$</Glyph></Tool><Caret label="Currency list" /><Tool><Glyph $size={15}>%</Glyph></Tool><Tool><Glyph $size={17}>’</Glyph></Tool>
                <Sep $lead /><Tool aria-label="Increase decimal">{I.decimal(true)}</Tool><Tool aria-label="Decrease decimal">{I.decimal(false)}</Tool>
              </Row>
            </Rows>
          </Group>
          <Group label="Styles" pad={9}>
            <BigButton w={72} icon={I.cond} top="Conditional" bottom="Formatting" caret />
            <BigButton w={60} icon={I.fmtTable} top="Format as" bottom="Table" caret />
            <BigButton w={44} icon={I.cellStyle} top="Cell" bottom="Styles" caret />
          </Group>
          <Group label="Cells" pad={8}>
            <BigButton w={40} icon={I.insert} top="Insert" caret />
            <BigButton w={44} icon={I.del} top="Delete" caret />
            <BigButton w={42} icon={I.format} top="Format" caret />
          </Group>
          <Group label="Editing" pad={6}>
            <Small>
              <Row><Tool aria-label="AutoSum">{I.sigma}</Tool><Caret label="AutoSum list" /></Row>
              <Row><Tool aria-label="Fill">{I.fillDown}</Tool><Caret label="Fill options" /></Row>
              <Row><Tool aria-label="Clear">{I.eraser}</Tool><Caret label="Clear options" /></Row>
            </Small>
            <BigButton w={46} icon={I.sort} top="Sort &" bottom="Filter" caret />
            <BigButton w={46} icon={I.find} top="Find &" bottom="Select" caret />
          </Group>
          <Group label="Add-ins">
            <BigButton w={62} icon={I.addins} top="Add-ins" />
          </Group>
          <Collapse><button aria-label="Collapse ribbon"><svg width="11" height="7" viewBox="0 0 11 7"><path d="m1 6 4.5-4.5L10 6" fill="none" stroke="#ccc" /></svg></button></Collapse>
        </Ribbon>
        <FormulaBar>
          <NameBox><NameInput aria-label="Name box" defaultValue="O26" /><Tri s={8} /></NameBox>
          <Dots>{I.dots}</Dots>
          <FxBox>
            <button aria-label="Cancel"><svg width="12" height="12" viewBox="0 0 12 12"><path d="m1 1 10 10M11 1 1 11" stroke="#777" strokeWidth="1.6" /></svg></button>
            <button aria-label="Enter"><svg width="14" height="12" viewBox="0 0 14 12"><path d="m1 6.5 4 4L13 1" fill="none" stroke="#777" strokeWidth="2.2" /></svg></button>
            <button aria-label="Insert function"><FxText>f<small>x</small></FxText></button>
          </FxBox>
          <FormulaField>
            <FormulaInput aria-label="Formula" />
            <FormulaToggle aria-label="Collapse formula bar"><svg width="8" height="6" viewBox="0 0 8 6"><path d="m1 5 3-3 3 3" fill="none" stroke="#fff" strokeWidth="1.8" /></svg></FormulaToggle>
          </FormulaField>
        </FormulaBar>
        <SheetArea>
          <Sheet>
            <Table>
              <colgroup>
                {[29, 72, 115, 87, 76, 51, ...restCols.map(() => 72)].map((w, i) => <col key={i} style={{ width: w }} />)}
                <col />
              </colgroup>
              <thead>
                <tr>
                  <Corner aria-label="Select all" />
                  {["A", "B", "G", "H", "I", ...restCols].map((k) => <ColHead key={k} $on={k === "O"} $double={k === "B"}>{k}</ColHead>)}
                  <ColHead />
                </tr>
              </thead>
              <tbody>
                <tr>
                  <RowHead>1</RowHead><Blank $edge />
                  <HeaderCell text="transaction_id" sorted /><HeaderCell text="TX_FRAUD" /><HeaderCell text="IMPACT" /><HeaderCell text="RISK" />
                  {restCells}
                </tr>
                {tx.map(([id, f, im, r], i) => {
                  const bg = i % 2 ? "#fff" : "#d9d9d9";
                  return (
                    <tr key={i}>
                      <RowHead $on={i === 24}>{i + 2}</RowHead><Blank $edge />
                      <Data $bg={bg} $flag $light>{id}</Data><Data $bg={bg} $flag>{f}</Data>
                      <Data $bg={impactColor[im]} $flag $align="center" $color={im === 5 ? "#fff" : "#000"}>{im}</Data>
                      <Data $bg={bg}>{r}</Data>
                      {restCells}
                    </tr>
                  );
                })}
              </tbody>
            </Table>
            <Selection />
            <RiskChart />
          </Sheet>
          <VScroll>
            <ScrollButton aria-label="Scroll up"><Tri dir="up" s={8} /></ScrollButton>
            <Track><VThumb /></Track>
            <ScrollButton aria-label="Scroll down"><Tri s={8} /></ScrollButton>
          </VScroll>
        </SheetArea>
        <SheetTabs>
          <NavArrows><Tool aria-label="Previous sheet"><Tri dir="left" color="#999" /></Tool><Tool aria-label="Next sheet"><Tri dir="right" color="#999" /></Tool></NavArrows>
          <SheetTab $w={126} $on>Risk Assessment</SheetTab><SheetTab $w={93}>Risk Matrix</SheetTab><SheetTab $w={68}>Legend</SheetTab>
          <AddSheet aria-label="New sheet"><svg width="17" height="17" viewBox="0 0 17 17"><circle cx="8.5" cy="8.5" r="7.5" fill="none" stroke="#ddd" /><path d="M8.5 4.5v8M4.5 8.5h8" stroke="#fff" strokeWidth="2" /></svg></AddSheet>
          <HScroll>
            <Dots>{I.dots}</Dots>
            <ScrollButton aria-label="Scroll left"><Tri dir="left" s={8} /></ScrollButton>
            <HTrack><HThumb /></HTrack>
            <ScrollButton aria-label="Scroll right"><Tri dir="right" s={8} /></ScrollButton>
          </HScroll>
        </SheetTabs>
        <StatusBar>
          <span>Ready</span>
          <Access>{I.access}Accessibility: Investigate</Access>
          <Display>{I.display}Display Settings</Display>
          <ViewButton $on aria-label="Normal view"><svg width="13" height="13" viewBox="0 0 13 13"><path d="M.5.5h12v12H.5zM4.5 0v13M8.5 0v13M0 4.5h13M0 8.5h13" fill="none" stroke="#fff" /></svg></ViewButton>
          <ViewButton aria-label="Page layout view"><svg width="14" height="13" viewBox="0 0 14 13"><path d="M.5.5h13v12H.5zM3.5 2.5h7v8h-7zM5 4.5h4M5 6.5h4M5 8.5h4" fill="none" stroke="#ddd" /></svg></ViewButton>
          <ViewButton aria-label="Page break view"><svg width="14" height="13" viewBox="0 0 14 13"><path d="M.5.5h13v12H.5z" fill="none" stroke="#ddd" /><path d="M1 1h4v7H1zM6 1h3v7H6z" fill="#ddd" /></svg></ViewButton>
          <ZoomButton aria-label="Zoom out"><svg width="9" height="9" viewBox="0 0 9 9"><path d="M0 4.5h9" stroke="#fff" /></svg></ZoomButton>
          <Slider type="range" aria-label="Zoom" defaultValue={50} />
          <ZoomButton aria-label="Zoom in"><svg width="9" height="9" viewBox="0 0 9 9"><path d="M0 4.5h9M4.5 0v9" stroke="#fff" /></svg></ZoomButton>
          <Percent>100%</Percent>
        </StatusBar>
      </Window>
    </Desktop>
  );
}
